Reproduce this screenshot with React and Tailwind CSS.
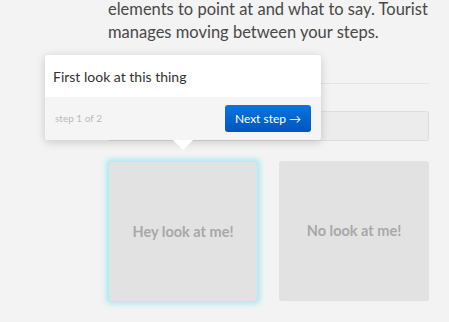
export default function App() {
  return (
    <div className="relative w-[449px] h-[322px] overflow-hidden bg-[#f3f3f3] font-['Lato',sans-serif]">
      <div className="pl-[108px] pr-[20px]">
        <p className="-mt-[2px] text-[16.5px] leading-[23px] text-[#484848] whitespace-nowrap">
          <span className="block">elements to point at and what to say. Tourist</span>
          <span className="block">manages moving between your steps.</span>
        </p>
        <div className="mt-[39px] h-px bg-[#e4e4e4]" />
        <div className="mt-[27px] h-[30px] bg-[#ececec] border border-[#dedede] rounded-[2px]" />
        <div className="mt-[20px] grid grid-cols-[150px_150px] gap-[21px]">
          <div className="h-[141px] bg-[#e2e2e2] rounded-[3px] border border-[#aef0f2] shadow-[0_0_5px_2px_rgba(110,225,235,0.55)] flex items-center justify-center">
            <span className="text-[14.5px] font-bold text-[#a8a8a8]">Hey look at me!</span>
          </div>
          <div className="h-[140px] bg-[#e2e2e2] rounded-[3px] flex items-center justify-center">
            <span className="text-[14.5px] font-bold text-[#a8a8a8]">No look at me!</span>
          </div>
        </div>
      </div>

      <div className="absolute left-[45px] top-[55px] w-[276px] bg-white rounded-[3px] shadow-[0_2px_10px_rgba(0,0,0,0.18)]">
        <div className="h-[42px] flex items-center px-[8px] text-[14px] text-[#333]">
          First look at this thing
        </div>
        <div className="h-[43px] bg-[#f5f5f5] rounded-b-[3px] flex items-center justify-between pl-[10px] pr-[10px]">
          <span className="text-[10px] text-[#bbbbbb]">step 1 of 2</span>
          <button className="h-[27px] w-[86px] rounded-[3px] bg-linear-to-b from-[#0f74dc] to-[#0055bf] text-white text-[12px] flex items-center justify-center">
            Next step →
          </button>
        </div>
        <div className="absolute left-[128px] top-full w-0 h-0 border-l-[10px] border-r-[10px] border-t-[10px] border-l-transparent border-r-transparent border-t-white" />
      </div>
    </div>
  );
}
